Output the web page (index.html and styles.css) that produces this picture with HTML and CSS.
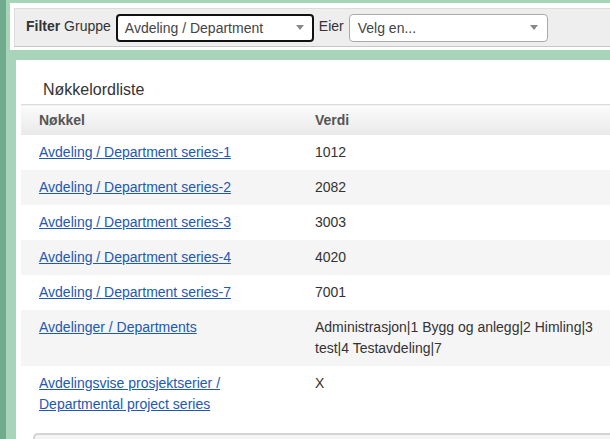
FILE: index.html
```html
<!DOCTYPE html>
<html lang="no">
<head>
    <meta charset="UTF-8">
    <meta name="viewport" content="width=device-width, initial-scale=1.0">
    <title>Nøkkelordliste</title>
    <link rel="stylesheet" href="styles.css">
</head>
<body>
    <div class="filter-wrap">
        <div class="filter-bar">
            <span class="filter-label"><b>Filter</b> Gruppe</span>
            <div class="select focused">
                <span>Avdeling / Department</span>
                <span class="arrow"></span>
            </div>
            <span class="filter-label">Eier</span>
            <div class="select">
                <span>Velg en...</span>
                <span class="arrow"></span>
            </div>
        </div>
    </div>

    <div class="panel">
        <h2>Nøkkelordliste</h2>
        <table class="list">
            <thead>
                <tr>
                    <th class="col-key">Nøkkel</th>
                    <th class="col-value">Verdi</th>
                </tr>
            </thead>
            <tbody>
                <tr><td><a href="#">Avdeling / Department series-1</a></td><td>1012</td></tr>
                <tr><td><a href="#">Avdeling / Department series-2</a></td><td>2082</td></tr>
                <tr><td><a href="#">Avdeling / Department series-3</a></td><td>3003</td></tr>
                <tr><td><a href="#">Avdeling / Department series-4</a></td><td>4020</td></tr>
                <tr><td><a href="#">Avdeling / Department series-7</a></td><td>7001</td></tr>
                <tr><td><a href="#">Avdelinger / Departments</a></td><td>Administrasjon|1 Bygg og anlegg|2 Himling|3 test|4 Testavdeling|7</td></tr>
                <tr><td><a href="#">Avdelingsvise prosjektserier / Departmental project series</a></td><td>X</td></tr>
            </tbody>
        </table>
        <div class="next-box"></div>
    </div>
</body>
</html>
```

FILE: styles.css
```css
body {
    margin: 0;
    background: #a8d5b9;
    border-left: 6px solid #6fab8c;
    font-family: "Liberation Sans", Arial, sans-serif;
    font-size: 14px;
    color: #333;
    overflow: hidden;
    height: 439px;
    box-sizing: border-box;
}
.filter-wrap {
    margin: 3px 0 0 4px;
    padding: 5px 0 3px 4px;
    background: white;
}
.filter-bar {
    display: flex;
    align-items: center;
    gap: 5px;
    height: 37px;
    padding-left: 11px;
    background: #eeeeee;
    border: 1px solid #dcdcdc;
    border-bottom-color: #c6c6c6;
    border-right: none;
}
.filter-label {
    font-size: 14px;
    color: #333;
    margin-top: -4px;
}
.select {
    display: flex;
    align-items: center;
    justify-content: space-between;
    box-sizing: border-box;
    width: 199px;
    height: 28px;
    padding: 0 9px 0 8px;
    background: white;
    border: 1px solid #aaa;
    border-radius: 4px;
    color: #444;
    font-size: 14px;
}
.select.focused {
    width: 198px;
    border: 2px solid #111;
    padding-left: 7px;
    padding-right: 8px;
}
.arrow {
    width: 0;
    height: 0;
    border-left: 4px solid transparent;
    border-right: 4px solid transparent;
    border-top: 5px solid #888;
}
.panel {
    margin: 10px 0 0 10px;
    padding: 19px 0 0 5px;
    background: white;
    height: 360px;
    overflow: hidden;
}
h2 {
    margin: 0 0 3px 22px;
    font-size: 16px;
    font-weight: normal;
    color: #333;
    line-height: 22px;
}
.list {
    border-collapse: collapse;
    width: 100%;
    table-layout: fixed;
}
.list th {
    text-align: left;
    font-weight: bold;
    color: #555;
    padding: 0 18px;
    height: 30px;
    background: linear-gradient(#fbfbfb, #e9e9e9);
    border-top: 1px solid #dcdcdc;
}
.col-key {
    width: 240px;
}
.list td {
    vertical-align: top;
    padding: 7px 6px 7px 18px;
    line-height: 21px;
    height: 21px;
}
.list td:first-child {
    padding-right: 18px;
}
.list tbody tr:nth-child(even) {
    background: #f5f5f5;
}
.list a {
    color: #2158b4;
}
.next-box {
    margin: 11px 0 0 12px;
    height: 30px;
    border: 2px solid #d4d4d4;
    border-right: none;
    border-radius: 5px 0 0 5px;
    background: #f4f4f4;
}
```
